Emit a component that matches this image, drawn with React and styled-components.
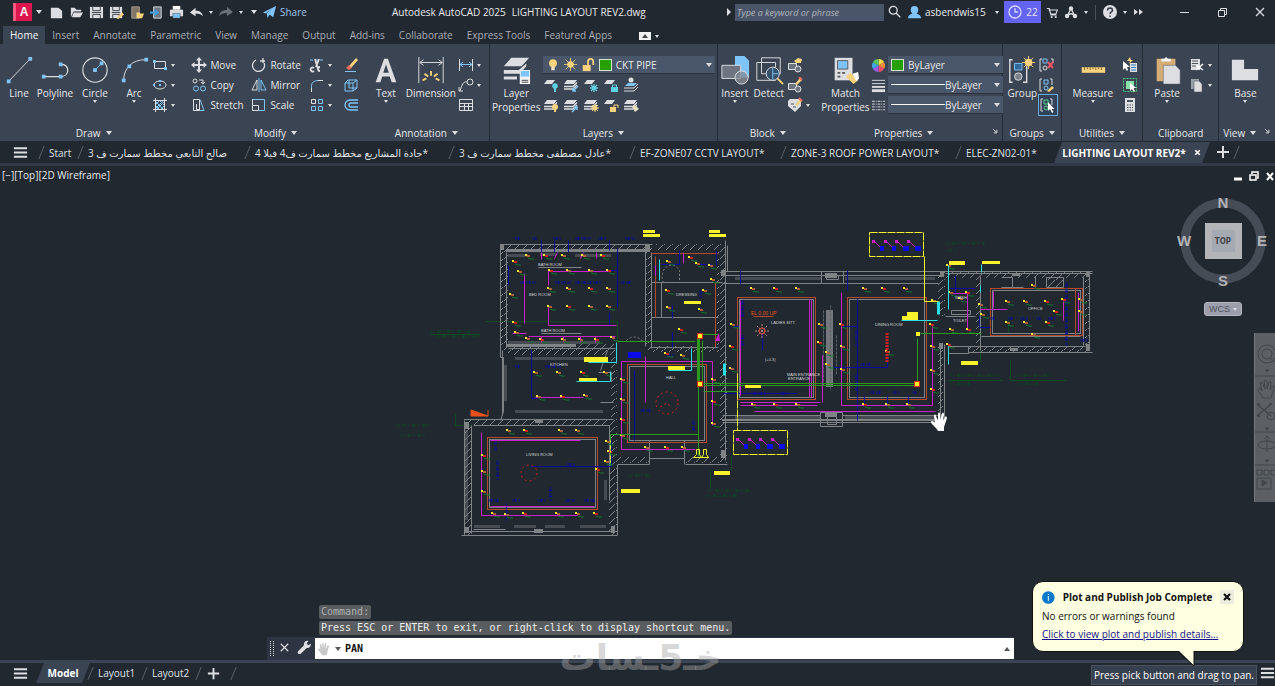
import React, { useState } from 'react';
import styled, { createGlobalStyle } from 'styled-components';

const GlobalStyle = createGlobalStyle`
  * {
    box-sizing: border-box;
  }

  body {
    margin: 0;
    background: #212830;
    color: #e6e8ea;
    font-family: 'Open Sans', 'Noto Sans', 'DejaVu Sans', sans-serif;
    font-size: 10px;
    overflow: hidden;
  }

  button, input, select {
    font: inherit;
    color: inherit;
    background: none;
    border: none;
    padding: 0;
    margin: 0;
  }
`;

const W = '#dcdee1';
const B = '#7fc4f8';
const Y = '#f8d27c';

/* ---------- layout ---------- */

const Page = styled.div`
  position: relative;
  display: flex;
  flex-direction: column;
  min-height: 100vh;
`;

const TitleBar = styled.header`
  display: grid;
  grid-template-columns: 388fr 336fr 551fr;
  align-items: center;
  height: 26px;
  padding-bottom: 2px;
  background: #222830;
`;

const QuickAccess = styled.div`
  display: flex;
  align-items: center;
  padding-left: 13px;
  min-width: 0;
`;

const AppButton = styled.button`
  width: 19px;
  height: 18px;
  background: #dd1650;
  border-left: 3px solid #f4597f;
  color: #fff;
  font-family: 'Liberation Sans', sans-serif;
  font-size: 12px;
  font-weight: bold;
  line-height: 16px;
`;

const IconButton = styled.button`
  display: flex;
  flex: none;
  align-items: center;
  justify-content: center;
  width: ${(props) => props.$w || 20}px;
  height: 20px;
  color: ${(props) => (props.$dim ? '#6b717a' : '#dcdee1')};
`;

const ShareLink = styled.a`
  display: flex;
  align-items: center;
  gap: 3px;
  color: #9fc4e8;
  text-decoration: none;
`;

const WindowTitle = styled.h1`
  display: flex;
  gap: 6px;
  margin: 0;
  padding-left: 4px;
  font-size: 10px;
  font-weight: normal;
  white-space: nowrap;
`;

const TitleTools = styled.div`
  display: flex;
  align-items: center;
  min-width: 0;
`;

const SearchInput = styled.input`
  flex: none;
  width: 149px;
  height: 17px;
  margin-right: 2px;
  padding: 0 2px;
  background: #4a5569;
  font-size: 9px;
  font-style: italic;
  outline: none;

  &::placeholder {
    color: #aeb4bd;
    opacity: 1;
  }
`;

const UserName = styled.span`
  width: 66px;
  padding-left: 1px;
`;

const TrialBadge = styled.button`
  display: flex;
  flex: none;
  align-items: center;
  justify-content: center;
  gap: 3px;
  width: 37px;
  height: 22px;
  margin-right: 2px;
  background: #6463f2;
  color: #e8e8ff;
`;

const Divider = styled.span`
  width: 1px;
  height: 15px;
  margin: 0 4px;
  background: #4a4f58;
`;

const WindowButtons = styled.div`
  display: flex;
  gap: 8px;
  margin-left: auto;
`;

const RibbonTabs = styled.nav`
  display: flex;
  align-items: stretch;
  height: 18px;
  padding-left: 3px;
  background: #222830;
`;

const RibbonTab = styled.button`
  padding: 0 7px;
  background: ${(props) => (props.$active ? '#3b4453' : 'transparent')};
  color: ${(props) => (props.$active ? '#f4f5f6' : '#a9aeb5')};
  white-space: nowrap;
`;

const Ribbon = styled.section`
  display: flex;
  height: 97px;
  background: #3b4453;
`;

const Panel = styled.div`
  display: flex;
  flex: ${(props) => props.$w} 1 0;
  flex-direction: column;
  min-width: 0;
  border-right: 1px solid ${(props) => (props.$edge ? '#262c36' : 'transparent')};
`;

const PanelBody = styled.div`
  display: flex;
  flex: 1;
  align-items: flex-start;
  gap: ${(props) => props.$gap || 0}px;
  padding: 11px 0 0 ${(props) => props.$pad || 2}px;
`;

const PanelTitle = styled.button`
  position: relative;
  display: flex;
  align-items: center;
  justify-content: center;
  gap: 5px;
  height: 17px;
  padding-right: ${(props) => (props.$launcher ? 14 : 0)}px;
  white-space: nowrap;
`;

const Launcher = styled.span`
  position: absolute;
  right: 2px;
  top: 1px;
`;

const Caret = styled.span`
  display: inline-block;
  flex: none;
  width: 0;
  height: 0;
  border: ${(props) => props.$size || 2}px solid transparent;
  border-top: ${(props) => (props.$size || 2) + 1}px solid #dcdee1;
  border-bottom: none;
`;

const LargeButton = styled.button`
  display: flex;
  flex: none;
  flex-direction: column;
  align-items: center;
  width: ${(props) => props.$w}px;
  line-height: 14px;
  white-space: nowrap;

  svg {
    flex: none;
    margin-bottom: 1px;
  }
`;

const SmallGrid = styled.div`
  display: grid;
  grid-template-columns: ${(props) => props.$cols};
  grid-auto-rows: 20px;
`;

const SmallButton = styled.button`
  display: flex;
  align-items: center;
  gap: 3px;
  height: 20px;
  white-space: nowrap;
  outline: ${(props) => (props.$pressed ? '1px solid #6aa9dd' : 'none')};
  background: ${(props) => (props.$pressed ? '#2f4258' : 'transparent')};
`;

const LayerTools = styled.div`
  flex: 1;
`;

const Combo = styled.div`
  display: flex;
  align-items: center;
  gap: 4px;
  height: 18px;
  margin: 1px 2px 1px 0;
  padding: 0 3px;
  background: #4a566a;
  border-bottom: 1px solid #2c333e;
`;

const ComboSelect = styled.select`
  flex: 1;
  min-width: 0;
  appearance: none;
  outline: none;
  text-align: ${(props) => (props.$right ? 'right' : 'left')};
  text-align-last: ${(props) => (props.$right ? 'right' : 'left')};
  padding-right: ${(props) => (props.$right ? 8 : 0)}px;
`;

const ColorSwatch = styled.span`
  width: 13px;
  height: 12px;
  background: #26a000;
  border: 1px solid #d7e4d2;
`;

const LineSample = styled.span`
  width: 54px;
  height: 1px;
  margin-right: -4px;
  background: #f4f5f6;
`;

const PropertyRows = styled.div`
  display: grid;
  flex: 1;
  grid-template-columns: 17px 1fr;
  grid-auto-rows: 20px;
  align-items: center;
`;

const FileTabs = styled.nav`
  display: flex;
  align-items: stretch;
  height: 25px;
  padding: 1px 0 0 0;
  background: #222830;
  border-bottom: 3px solid #323a47;
`;

const MenuButton = styled.button`
  display: flex;
  flex: none;
  align-items: center;
  justify-content: flex-end;
  width: ${(props) => props.$w}px;
  padding-right: ${(props) => props.$w - 28}px;
`;

const FileTab = styled.button`
  position: relative;
  flex: 0 1 ${(props) => props.$w}px;
  padding-left: 8px;
  text-align: left;
  white-space: nowrap;
  color: #dfe1e4;

  svg {
    display: block;
  }

  &::before {
    content: '';
    position: absolute;
    left: 0;
    top: 4px;
    width: 1px;
    height: 13px;
    background: #59616c;
    transform: skewX(-22deg);
  }
`;

const ActiveTab = styled.button`
  display: flex;
  align-items: center;
  justify-content: center;
  gap: 7px;
  width: ${(props) => props.$w}px;
  background: #3b4453;
  color: #fff;
  font-weight: bold;
  white-space: nowrap;
  clip-path: polygon(8px 0, 100% 0, calc(100% - 8px) 100%, 0 100%);
`;

const Viewport = styled.main`
  position: relative;
  flex: 1;
  min-height: 0;
  background: #212830;
`;

const Sheet = styled.svg`
  display: block;
  width: 100%;
  height: auto;
`;

const ViewportLabel = styled.div`
  position: absolute;
  left: 2px;
  top: 2px;
  line-height: 14px;
`;

const ViewportButtons = styled.div`
  position: absolute;
  right: 1px;
  top: 5px;
  display: flex;
  gap: 7px;
`;

const ViewCube = styled.div`
  position: absolute;
  right: 6px;
  top: 26px;
  display: flex;
  flex-direction: column;
  align-items: center;
`;

const WcsButton = styled.button`
  display: flex;
  align-items: center;
  justify-content: space-between;
  width: 38px;
  height: 14px;
  margin-top: 10px;
  padding: 0 4px;
  background: #9c9eab;
  border: 1px solid #b4b6c0;
  border-radius: 3px;
  color: #50535e;
  font-family: 'Liberation Sans', sans-serif;
  font-size: 9px;
`;

const NavBar = styled.div`
  position: absolute;
  right: 0;
  top: 167px;
  width: 21px;
  height: 169px;
  background: #5c6064;
  border-left: 1px solid #74787c;
  overflow: hidden;
`;

const CommandArea = styled.section`
  position: absolute;
  left: 267px;
  right: 261px;
  bottom: 0;
`;

const History = styled.p`
  width: max-content;
  height: 14px;
  margin: 0 0 2px 52px;
  padding: 0 2px;
  background: #5a5d5f;
  border-radius: 2px;
  color: ${(props) => (props.$old ? '#adb0b2' : '#eceded')};
  font-family: 'DejaVu Sans Mono', monospace;
  font-size: 10px;
  line-height: 14px;
`;

const CommandBar = styled.div`
  display: flex;
  align-items: stretch;
  height: 23px;
  background: #2d3442;
  padding-bottom: 1px;
`;

const CommandField = styled.label`
  display: flex;
  flex: 1;
  align-items: center;
  gap: 4px;
  margin-top: 1px;
  padding: 0 4px 0 2px;
  background: #fff;
  color: #111;
`;

const CommandInput = styled.input`
  flex: 1;
  min-width: 0;
  outline: none;
  font-family: 'DejaVu Sans Mono', monospace;
  font-weight: bold;
`;

const Watermark = styled.div`
  position: absolute;
  left: 50%;
  bottom: 4px;
  width: 156px;
  margin-left: -78px;
  color: rgba(168, 168, 168, 0.46);
  font-family: 'DejaVu Sans', sans-serif;
  font-size: 36px;
  font-weight: bold;
  line-height: 48px;
  text-align: center;
  white-space: nowrap;
  pointer-events: none;
`;

const StatusBar = styled.footer`
  display: flex;
  align-items: stretch;
  height: 26px;
  padding-bottom: 3px;
  background: #222830;
  border-top: 3px solid #3b4453;
`;

const StatusTip = styled.span`
  display: flex;
  align-items: center;
  height: 20px;
  margin: 2px 3px 0 auto;
  padding: 0 2px;
  background: #37404e;
  border: 1px solid #4a5261;
  color: #fff;
  white-space: nowrap;
`;

const Balloon = styled.aside`
  position: absolute;
  right: 31px;
  bottom: 34px;
  width: 212px;
  height: 71px;
  padding: 8px 9px;
  background: #ffffe1;
  border: 1px solid #111;
  border-radius: 11px;
  color: #111;
`;

const BalloonHead = styled.div`
  display: flex;
  align-items: center;
  gap: 8px;
  height: 14px;
  font-weight: bold;
  white-space: nowrap;
`;

const BalloonClose = styled.button`
  display: flex;
  align-items: center;
  justify-content: center;
  width: 14px;
  height: 14px;
  margin-left: auto;
  background: #ededdf;
`;

const BalloonText = styled.p`
  margin: 5px 0;
  line-height: 14px;
`;

const BalloonLink = styled.a`
  display: block;
  color: #12128c;
  line-height: 13px;
`;

const BalloonTail = styled.svg`
  position: absolute;
  right: 44px;
  top: 68px;
`;

/* ---------- icons ---------- */

const sheetStack = (
  <>
    <path d="M4 3h10l-3 4H1z" fill={W} />
    <path d="M1 9.500h9l4-4M1 12h9l4-4" stroke={W} strokeWidth="1.300" fill="none" />
  </>
);

const glyphs = {
  newFile: <path d="M2 3h8l4 3v8H2z" fill={W} />,
  open: <path d="M2 13V3h4l2 2h5v2H5zM5 8h10l-3 5H3z" fill={W} />,
  save: (
    <>
      <path d="M1 2h14v12H1z" fill={W} />
      <path d="M4 2v4h8V2M4 14v-4h8v4M3 8h10" stroke="#3a4048" fill="none" />
    </>
  ),
  saveAs: (
    <>
      <path d="M1 2h13v12H1z" fill={W} />
      <path d="M4 2v4h7V2M4 14v-4h7v4M3 8h9" stroke="#3a4048" fill="none" />
      <path d="M8 14l6-6 2 2-6 5z" fill={Y} />
    </>
  ),
  openWeb: (
    <>
      <path d="M3 2h8v12H3z" fill="#7e7568" stroke="#a8a092" />
      <path d="M8 8h3l1 1h4l-2 5H8z" fill={Y} />
    </>
  ),
  saveWeb: (
    <>
      <path d="M5 2h8v12H5z" fill="#6f767f" stroke={W} />
      <path d="M1 7h5V4l5 4-5 4V9H1z" fill="#3f9fe0" />
    </>
  ),
  print: (
    <>
      <path d="M4 1h8v4H4z" fill="#fff" />
      <path d="M1 5h14v7H1z" fill={W} />
      <path d="M4 9h8v5H4z" fill={B} stroke="#3a4048" strokeWidth=".5" />
    </>
  ),
  undo: <path d="M1 8l6-5v3c5 0 7 2 8 6-2-2-4-3-8-3v3z" fill="currentColor" />,
  redo: <path d="M15 8L9 3v3C4 6 2 8 1 12c2-2 4-3 8-3v3z" fill="currentColor" />,
  plane: <path d="M1 8L15 1l-3 12-4-3-2 4-1-5 6-5-7 5z" fill={B} />,
  search: <path d="M6 1.500a4.500 4.500 0 100 9 4.500 4.500 0 000-9zM9.500 9.500L14 14" stroke={W} fill="none" strokeWidth="1.500" />,
  user: <path d="M8 1a4 4 0 014 4c0 2-1 4-2 4 3 1 5 2 5 5H1c0-3 2-4 5-5-1 0-2-2-2-4a4 4 0 014-4z" fill={B} />,
  clock: <path d="M8 2a6 6 0 100 12A6 6 0 008 2zM8 4v4h3" stroke="#d8d8ff" fill="none" strokeWidth="1.300" />,
  cart: (
    <>
      <path d="M1 3h3l2 8h7M4 5h10l-2 5H6z" stroke={W} fill="none" strokeWidth="1.300" />
      <circle cx="7" cy="13.500" r="1.300" fill={W} />
      <circle cx="12" cy="13.500" r="1.300" fill={W} />
    </>
  ),
  network: (
    <>
      <path d="M8 4L4 12M8 4l4 8M4 12q4-4 8 0" stroke={W} fill="none" strokeWidth="1.500" />
      <circle cx="8" cy="4" r="2.500" fill={W} />
      <circle cx="3.500" cy="12.500" r="2.500" fill={W} />
      <circle cx="12.500" cy="12.500" r="2.500" fill={W} />
    </>
  ),
  help: (
    <>
      <circle cx="8" cy="8" r="7" fill={W} />
      <path d="M5.500 6.500C5.500 3 10.500 3 10.500 6.500 10.500 8 8 8 8 10M8 11.500v1.500" stroke="#333a45" fill="none" strokeWidth="1.500" />
    </>
  ),
  more: <path d="M4 5l4 3-4 3zM9 5l4 3-4 3z" fill={W} />,
  minimize: <path d="M4 8.500h9" stroke={W} />,
  restore: <path d="M4.500 6.500h6v6h-6zM6.500 6V4.500h6v6H11" stroke={W} fill="none" />,
  close: <path d="M4 4l8 8M12 4l-8 8" stroke={W} strokeWidth="1.200" />,
  menu: <path d="M1 3.500h14M1 8h14M1 12.500h14" stroke={W} strokeWidth="2" />,
  plus: <path d="M8 2v12M2 8h12" stroke={W} strokeWidth="2" />,
  heavyX: <path d="M4 4l8 8M12 4l-8 8" stroke="currentColor" strokeWidth="3" />,

  rect: <><path d="M2.500 4.500h11v7h-11z" stroke={W} fill="none" /><path d="M1 3h3v3H1zM12 10h3v3h-3z" fill={B} /></>,
  ellipse: <><ellipse cx="8" cy="8" rx="6" ry="4" stroke={W} fill="none" /><path d="M1 7h2v2H1zM7 7h2v2H7zM7 3h2v2H7z" fill={B} /></>,
  hatch: (
    <>
      <path d="M3.500 1v14M12.500 1v14M1 3.500h14M1 12.500h14" stroke={W} fill="none" />
      <path d="M4 7l3-3M4 11l7-7M5 12l7-7M9 12l3-3M4 5l7 7M8 4l4 4M4 9l3 3" stroke={B} />
    </>
  ),
  move: <path d="M8 0l3 3.500H9V7h3.500V5L16 8l-3.500 3V9H9v3.500h2L8 16l-3-3.500h2V9H3.500v2L0 8l3.500-3v2H7V3.500H5z" fill={W} />,
  copy: <><path d="M4 2a2 2 0 100 4 2 2 0 000-4zM8 3h4v4M10 5l2 2 2-2" stroke={W} fill="none" /><path d="M5 9a2.500 2.500 0 100 5 2.500 2.500 0 000-5zM12 9a2.500 2.500 0 100 5 2.500 2.500 0 000-5z" stroke={B} fill="none" /></>,
  stretch: <><path d="M2.500 2.500h6v11h-6zM9 12.500H5.500V7" stroke={W} fill="none" /><path d="M9 2.500l4 11H9" stroke={B} fill="none" /></>,
  rotate: <path d="M5 3a6 6 0 108 3M9 4h5M12 1v5" stroke={W} fill="none" strokeWidth="1.300" />,
  mirror: <><path d="M6 3v10H1z" stroke={W} fill="none" /><path d="M10 3v10h5zM8 1v14" stroke={B} fill="none" /></>,
  scale: <><path d="M1.500 2.500h12v11H8" stroke={B} fill="none" /><path d="M1.500 8.500h6v5h-6zM1.500 2v6" stroke={W} fill="none" /></>,
  trim: <><path d="M1 3h14" stroke={B} strokeDasharray="3 2" /><path d="M6 2l3 10M10 2L7 10M5 11a2 2 0 100 3M11 10a2 2 0 100 4" stroke={W} fill="none" strokeWidth="1.800" /></>,
  fillet: <><path d="M2.500 12V9q0-5.500 7-5.500" stroke={B} fill="none" /><path d="M9 3.500h5M2.500 11v4" stroke={W} /></>,
  array: <><path d="M2.500 2.500h4v4h-4z" stroke={W} fill="none" /><path d="M9.500 2.500h4v4h-4zM2.500 9.500h4v4h-4zM9.500 9.500h4v4h-4z" stroke={B} fill="none" /></>,
  erase: <><path d="M6 9l7-8 2 2-7 8z" fill={Y} /><path d="M3 11l3-3 3 3-3 2z" fill="#f06a5a" /><path d="M2 14.500h11" stroke={B} /></>,
  explode: <path d="M2 6h8v8H2zM5 3h9v8M2 6l3-3M10 6l4-3M10 14l4-3M6 3v8h8" stroke={B} fill="none" />,
  offset: <path d="M15 3H7a5 5 0 000 10h8M15 6H8a2 2 0 000 4h7" stroke={B} fill="none" strokeWidth="1.300" />,
  linear: <><path d="M1.500 2v12M14.500 2v12" stroke={W} /><path d="M2 7.500h12M5 5L2 7.500 5 10M11 5l3 2.500L11 10" stroke={B} fill="none" /></>,
  leader: <><circle cx="12" cy="5" r="3" stroke={W} fill="none" /><path d="M9 5C5 4 4 8 2 14M1 10v4h4" stroke={W} fill="none" /></>,
  table: <path d="M1.500 2.500h13v11h-13zM1.500 6.500h13M1.500 9.500h13M6.500 6v8M10.500 6v8" stroke={W} fill="none" />,

  bulb: <><circle cx="8" cy="6" r="4.500" fill={Y} /><path d="M6 10h4v4H6z" fill="#eee2c4" /></>,
  sun: <><circle cx="8" cy="8" r="4" fill={Y} /><path d="M8 0v16M0 8h16M2 2l12 12M14 2L2 14" stroke={Y} /></>,
  unlock: <><path d="M2 8h9v7H2z" fill={Y} /><path d="M8 8V4a3 3 0 016 0v4" stroke={Y} fill="none" strokeWidth="2" /></>,
  layerOff: <><path d="M4 3h8l-3 4H1z" fill={W} /><circle cx="12" cy="9" r="2.800" fill="#5fd0e0" /><path d="M11 11h2v4h-2z" fill="#5fd0e0" /></>,
  layerIso: <>{sheetStack}<path d="M15 9l-5 5m0-3v3h3" stroke={B} fill="none" strokeWidth="1.500" /></>,
  layerFreeze: <><path d="M4 3h8l-3 4H1z" fill={W} /><path d="M11 7v8M7 11h8M8 8l6 6M14 8l-6 6" stroke="#5fd0e0" strokeWidth="1.300" /></>,
  layerLock: <><path d="M4 3h8l-3 4H1z" fill={W} /><path d="M8 10h7v5H8z" fill="#5fd0e0" /><path d="M9.500 10V8h4v2" stroke="#5fd0e0" fill="none" /></>,
  layerCurrent: <><circle cx="8" cy="3" r="2.500" fill={W} /><path d="M5 6h9l-3 3H2z" fill={B} /><path d="M1 11h10l4-4M1 14h10l4-4" stroke={W} fill="none" /></>,
  layerOn: <>{sheetStack}<circle cx="12" cy="10" r="3" fill={Y} /><path d="M11 12h2v3h-2z" fill={Y} /></>,
  layerUniso: <>{sheetStack}<path d="M9 15l5-5m-3 0h3v3" stroke={B} fill="none" strokeWidth="1.500" /></>,
  layerThaw: <>{sheetStack}<circle cx="12" cy="11" r="2.500" fill={Y} /><path d="M12 7v8M8 11h8M9 8l6 6M15 8l-6 6" stroke={Y} /></>,
  layerUnlock: <><path d="M4 3h8l-3 4H1z" fill={W} /><path d="M7 10h6v5H7z" fill={Y} /><path d="M11 10V8h4v3" stroke={Y} fill="none" /></>,
  layerMatch: <>{sheetStack}<path d="M9 10l3-2 4 4-4 3z" fill="#e7dfc0" /></>,

  blockCreate: <><path d="M1.500 6.500h8v6h-8z" fill="#6b7380" stroke={W} /><circle cx="11" cy="12" r="3" fill="#6b7380" stroke={W} /><path d="M7 4l4-3 4 1-1 4H9z" fill={Y} /></>,
  blockEdit: <><path d="M1.500 6.500h8v6h-8z" fill="#6b7380" stroke={W} /><circle cx="11" cy="12" r="3" fill="#6b7380" stroke={W} /><path d="M8 7l5-6 2 2-5 5z" fill={Y} /><path d="M12 0l3 3" stroke="#f06a5a" strokeWidth="2" /></>,
  attribute: <><path d="M1 4l2-2h11v7l-6 6-7-6z" fill={W} /><path d="M4 7h3M6 10h3" stroke="#555" /><path d="M8 8l5-6 2 2-5 5z" fill={Y} /><path d="M12 1l3 3" stroke="#f06a5a" strokeWidth="2" /></>,
  wheel: (
    <>
      <path d="M8 8V1a7 7 0 016 3.500z" fill="#f6d94b" />
      <path d="M8 8l6-3.500a7 7 0 010 7z" fill="#f28c38" />
      <path d="M8 8l6 3.500A7 7 0 018 15z" fill="#e84c6a" />
      <path d="M8 8v7a7 7 0 01-6-3.500z" fill="#9a5be0" />
      <path d="M8 8l-6 3.500a7 7 0 010-7z" fill="#3fa9e8" />
      <path d="M8 8L2 4.500A7 7 0 018 1z" fill="#5cc45c" />
    </>
  ),
  lineWeight: <><path d="M1 2.500h14M1 6h14" stroke={W} strokeWidth="1" /><path d="M1 9.500h14" stroke={W} strokeWidth="2" /><path d="M1 13.500h14" stroke={W} strokeWidth="3" /></>,
  lineType: <path d="M1 3.500h14M1 6.500h14M1 9.500h14M1 12.500h14" stroke={W} strokeDasharray="3 1 1 1" />,
  ungroup: <><path d="M3 2H1v12h2M12 2h2v4" stroke={W} fill="none" /><path d="M4 2h4v4H4z" stroke={B} fill="none" /><circle cx="6" cy="11" r="2" stroke={W} fill="none" /><path d="M9 5l5 6M14 5l-5 6" stroke="#ee5566" strokeWidth="2" /></>,
  groupEdit: <><path d="M3 2H1v12h2M11 2h2v6" stroke={W} fill="none" /><path d="M5 3h4v4H5z" stroke={B} fill="none" /><circle cx="7" cy="11" r="2" stroke={B} fill="none" /><path d="M8 14l5-5 2 2-5 4z" fill={Y} /></>,
  groupSelect: <><path d="M4 2H2v12h2M11 2h2v6" stroke={W} fill="none" /><path d="M5 3h4v4H5z" stroke="#5fd08a" fill="none" /><circle cx="7" cy="11" r="2" stroke="#5fd08a" fill="none" /><path d="M9 5v9l2-2 2 4 1.500-1-2-3h3z" fill="#fff" /></>,
  quickSelect: <><path d="M8 6h7v9H8z" fill={W} /><path d="M9 8h5M9 10.500h5M9 13h5" stroke="#2a7fc0" /><path d="M1 4v9l2-2 2 3 1-1-1-3h3z" fill="#fff" /><path d="M8 0L5 4h3L7 7l4-4H9z" fill={Y} /></>,
  selectAll: <><path d="M1.500 1.500h13v13h-13z" stroke="#4dc47e" fill="none" strokeDasharray="2 1" /><path d="M4 4h8v8H4z" fill="#8be0a8" /><path d="M8 6v8l2-2 1.500 3 1.500-1-1.500-3h3z" fill="#fff" /></>,
  calc: <><path d="M3 1h10v14H3z" fill={W} /><path d="M5 3h6v2H5z" fill="#4a5260" /><path d="M5 8h6M5 10.500h6M5 13h6" stroke="#4a5260" strokeDasharray="1.500 1" /></>,
  cut: <><path d="M2 2h9v11H2z" fill={W} /><path d="M3 4h6M3 6.500h6M3 9h4" stroke="#555" /><path d="M7 8l7 5M14 7l-7 6" stroke="#fff" strokeWidth="1.500" /></>,
  copyClip: <><path d="M2 2h8v10H2z" fill="#9aa0a8" /><path d="M5 4h5l3 3v8H5z" fill={W} stroke="#555c68" strokeWidth=".6" /></>,
  launcher: <path d="M5 5l5 5M11 6v5H6" stroke={W} fill="none" strokeWidth="1.500" />,
  wrench: <path d="M1 13l7-7c-1-3 2-6 5-5l-2 3 2 2 3-2c0 4-3 6-5 5l-7 7c-2 1-4-1-3-3z" fill={W} />,
  hand: <path d="M6 15C4 12 1 9 1 8s2-1 3 1L3 3c0-1 1.500-1 2 0l1 4V1.500c0-1 1.500-1 1.500 0L8 7l1-5.500c0-1 2-1 1.500.5L10 8l2-4c1-1 2 0 1.500 1L12 11l-1 4z" fill="currentColor" />,

  line: <><path d="M5 28L28 4" stroke={W} /><path d="M3 26h4v4H3zM26 2h4v4h-4z" fill={B} /></>,
  polyline: <><path d="M4 23h18c10 0 10-13 1-13" stroke={W} fill="none" strokeWidth="1.300" /><path d="M2 21h4v4H2zM20 21h4v4h-4zM20 8h4v4h-4z" fill={B} /></>,
  circle: <><circle cx="16" cy="16" r="13" stroke={W} fill="none" strokeWidth="1.200" /><path d="M16 16l7-7" stroke={B} /><path d="M14 14h4v4h-4zM21 7h4v4h-4z" fill={B} /></>,
  arc: <><path d="M5 27C5 14 14 5 28 5" stroke={W} fill="none" /><path d="M3 25h4v4H3zM9 10h4v4H9zM27 3h4v4h-4z" fill={B} /></>,
  text: <path d="M5 29L14 4h4l9 25h-5l-2-6h-8l-2 6zM13 19h6l-3-9z" fill={W} />,
  dimension: <><path d="M3 2v28M29 2v28M4 8h24M8 5L4 8l4 3M24 5l4 3-4 3" stroke={W} fill="none" /><path d="M7 27l4-2M9 20l4 3M16 17v5M23 20l-4 3M25 27l-4-2" stroke={Y} strokeWidth="2" /></>,
  layerProps: <><path d="M11 3h19l-8 9H3zM3 16h16l8-7v3l-7 8H3zM3 23h14v3H3z" fill={W} /><path d="M20 16h11v15H20z" fill="#f1f3f5" /><path d="M21 17h9v6h-9z" fill={B} /><path d="M22 27h7M22 29h7" stroke="#444" /></>,
  insert: <><path d="M16 1h10l5 5v18H16z" fill={B} /><path d="M2 11h20v14H2z" fill="#6f7580" stroke={W} /><circle cx="23" cy="24" r="7" fill="#868c96" fillOpacity=".8" stroke={W} /></>,
  detect: <><path d="M8 3h20v17H8zM3 8h20v19H3z" stroke={W} fill="none" /><circle cx="20" cy="20" r="7" fill="#35506b" stroke={W} /><path d="M20 14v12M20 20h6" stroke={B} /><path d="M25 25l6 6" stroke={Y} strokeWidth="2" /></>,
  match: <><path d="M5 3h19v24H5z" fill={W} /><path d="M8 6h11v9H8z" fill={B} stroke="#555" /><path d="M8 19h3M13 19h3M8 23h3" stroke="#555" strokeWidth="2" /><path d="M17 23l5-4 8 8-5 4z" fill={Y} /><path d="M24 20l6-2 1 7-3 3z" fill="#fff" /></>,
  group: <><path d="M6 5H3v24h3M17 29h4V12" stroke={W} fill="none" strokeWidth="1.500" /><path d="M8 9h8v7H8z" fill="#35689a" stroke={B} /><circle cx="12" cy="23" r="4" fill="#7b828d" stroke={W} /><circle cx="23" cy="8" r="4" fill={Y} /><path d="M23 1v14M16 8h14M18 3l10 10M28 3L18 13" stroke={Y} /></>,
  measure: <><path d="M4 13h25v6H4z" fill={Y} /><path d="M7 13v3M10 13v2M13 13v3M16 13v2M19 13v3M22 13v2M25 13v3" stroke="#7d6630" /></>,
  paste: <><path d="M5 4h20v24H5z" fill="#d6ad76" /><path d="M10 4h3l2-2 2 2h3v3H10z" fill="#f4f4f4" /><path d="M12 11h13l5 5v15H12z" fill={W} stroke="#555c68" strokeWidth=".6" /></>,
  base: <path d="M2 5h13v10h15v12H2z" fill={W} />,
};

const Glyph = ({ name, size = 16 }) => (
  <svg width={size} height={size} viewBox={size >= 26 ? '0 0 32 32' : '0 0 16 16'} aria-hidden="true">
    {glyphs[name]}
  </svg>
);

/* ---------- ribbon pieces ---------- */

const Large = ({ icon, w, label, menu }) => (
  <LargeButton $w={w}>
    <Glyph name={icon} size={30} />
    {label.map((line) => (
      <span key={line}>{line}</span>
    ))}
    {menu && <Caret />}
  </LargeButton>
);

const Small = ({ icon, label, menu, pressed }) => (
  <SmallButton $pressed={pressed} aria-label={label || icon}>
    <Glyph name={icon} />
    {label}
    {menu && <Caret />}
  </SmallButton>
);

const RibbonPanel = ({ w, title, edge, pad, gap, launcher, noMenu, children }) => (
  <Panel $w={w} $edge={edge}>
    <PanelBody $pad={pad} $gap={gap}>{children}</PanelBody>
    <PanelTitle $launcher={launcher}>
      {title}
      {!noMenu && <Caret $size={3} />}
      {launcher && (
        <Launcher>
          <Glyph name="launcher" size={10} />
        </Launcher>
      )}
    </PanelTitle>
  </Panel>
);

const PropertyCombo = ({ label, line }) => (
  <Combo>
    {line ? <LineSample /> : <ColorSwatch />}
    <ComboSelect aria-label={label} $right={line}>
      <option>ByLayer</option>
    </ComboSelect>
    <Caret $size={3} />
  </Combo>
);

/* ---------- drawing ---------- */

const GRAY = '#808386';
const MAG = '#cc1fcc';
const BROWN = '#b5482a';
const BLUE = '#0a0a9c';
const GREEN = '#2b9a18';
const DARK = '#0d4a22';
const YEL = '#f8f32b';

// x, y, width, height
const hatchedWalls = [
  [500, 244, 152, 7], [500, 251, 8, 97], [500, 344, 115, 6], [508, 350, 110, 5],
  [645, 250, 6, 100], [655, 244, 68, 6], [717, 244, 9, 106], [651, 346, 75, 6],
  [720, 352, 7, 110], [617, 457, 32, 6], [685, 457, 42, 6], [611, 350, 6, 70],
  [464, 419, 153, 6], [464, 425, 8, 110], [609, 425, 8, 110],
  [938, 272, 7, 44], [938, 344, 7, 77], [975, 275, 5, 72], [945, 272, 145, 6],
  [1085, 276, 5, 75], [968, 346, 122, 6], [1046, 278, 17, 9],
];

const solidWalls = [
  [506, 249, 142, 3], [506, 344, 70, 3], [500, 244, 4, 6], [645, 244, 5, 8],
  [722, 419, 222, 2], [825, 413, 12, 4], [825, 273, 12, 5], [940, 272, 4, 5],
  [1086, 272, 4, 5], [1086, 344, 4, 7], [939, 343, 4, 6], [464, 422, 5, 7],
  [464, 527, 5, 6], [611, 526, 4, 7], [534, 529, 9, 4], [721, 270, 5, 6],
  [721, 450, 5, 8], [535, 420, 8, 3], [1012, 274, 8, 2], [1010, 348, 8, 3],
];

const grayLines = [
  'M500 244H652M500 244V357H503V411L500 420M506 252V344M645 250V346M651 252V348M651 282H722M651 317H718M661 282V317',
  'M727 245V271M725 240V460M617 464H649V440M649 449H684V458H649M685 464H727M684 440V464M617 464V535M461 535H617M464 419H613',
  'M464 420V535M471 425V533M609 425V500M465 531H616M473 529H505M502 350V415M508 348H615M651 347H718M473 425H609',
  'M722 271H1092M722 275H944M722 283H821M843 283H938M722 422H944M722 415H820M842 415H944',
  'M821 271H843V283H821ZM826 275H838V279H826ZM820 412H842V426H820ZM827 415H836V424H827Z',
  'M945 273H1092M1089 271V350M1083 277V345M968 352H1092M968 346H1085M944 344V421M940 344V421M945 316H975M951 310H970V314H951Z',
  'M1001 277H1012V287H1001M1012 287H1023M980 276V350M981 336H1080M948 346H968V353H948ZM1035 276V287M1046 277H1063V287H1046Z',
  'M600 370L607 350M598 372H611V380M600 402H613',
];

const dottedLines = [
  'M508 255H528M540 254H555M575 255H610M515 358H605M515 411H602M735 278H820M845 278H935M735 417H820M845 417H935',
  'M474 526H500M514 526H535M545 526H565M580 526H605M466 430V520M508 342H600M505 365V400M605 480V500',
];

const innerRooms = [
  [627, 364, 79, 78], [487, 437, 110, 72], [737, 297, 78, 102], [847, 297, 79, 102], [990, 288, 92, 47],
];

const magentaLines = [
  'M524 273V323M548 271H608M548 271V285M548 307V325H616M512 333H526M528 336H615M541 336V342M563 336V341M580 336V341M595 336V342',
  'M541 252V259M554 258L557 252M580 258L583 252M596 258V252M535 397H583M645 356V402',
  'M712 425V361H621V449H695M481 432V515H577M490 440H580M490 506H594M740 300V395M809 299V397M811 299V397',
  'M740 402H820M740 405H817M822 355V402M841 292V405H932V325M754 411H935M950 293H967V330M980 309H1007M993 291V307M1063 301V320M1078 292V331M655 265V275M683 253V263',
];

const blueLines = [
  'M541 240V252M554 240V252M568 240V252M609 240V250M617 248V307M609 270H617M609 312V325M531 350V398H537M508 265V285',
  'M530 466H611V440M506 503V520M733 326H738M762 333V350M723 393H797M740 270V284M857 298V420M847 270V290M833 367H887V357M841 326H857',
  'M864 395V405M887 395V405M908 395V405M661 264H680M697 264H712M679 250V264M716 250V265M672 305V318M672 332V347M722 393H733M955 275V295M950 288H975M979 316V327H990M634 370V440',
];

const blueTicks = [
  'M515 238H520M532 238H538M553 238H560M575 238H590M598 238H606M625 238H634',
  'M520 282H535M555 282H570M575 282H600M620 282H630M515 366H520M545 366H560M640 410H650M693 420V432M495 440V452M497 460V480M550 487V500',
  'M488 500H500M512 500H520M538 500H546M565 500H574M584 500H594M567 464H575M752 393H765M780 393H788M742 300V316M742 335V345',
  'M870 392H880M892 392H900M912 392H918M856 330V345M856 375V390M990 318H996M1008 318H1014M1020 318H1028M1036 318H1040M1048 318H1056M1066 282V345M860 364H872M1080 340H1088M666 355H673M700 290V298',
];

const fixtures = [
  [550, 271], [568, 271], [590, 271], [608, 271], [549, 289], [568, 289], [590, 289], [608, 289],
  [549, 307], [568, 307], [590, 307], [608, 307], [514, 262], [519, 272], [511, 295], [514, 323], [516, 333],
  [527, 339], [541, 340], [563, 340], [580, 340], [596, 340], [612, 338], [527, 256], [545, 256], [563, 256], [583, 256], [602, 256],
  [535, 373], [558, 373], [582, 373], [605, 373], [538, 397], [562, 397], [585, 396], [668, 262], [690, 258], [697, 264], [710, 266],
  [667, 291], [704, 291], [668, 308], [680, 330], [700, 310], [712, 280], [666, 354], [682, 356],
  [508, 431], [525, 431], [560, 431], [577, 431], [483, 456], [483, 472], [483, 492], [597, 470], [493, 514], [506, 515], [524, 514],
  [557, 514], [577, 514], [595, 514], [607, 442], [606, 462], [609, 452], [622, 380], [622, 400], [622, 420], [622, 436], [713, 380],
  [713, 402], [713, 424], [646, 448], [666, 448], [683, 448], [752, 289], [775, 289], [797, 289], [864, 289], [883, 289], [905, 289],
  [732, 325], [731, 347], [731, 369], [753, 405], [775, 405], [797, 405], [820, 325], [819, 343], [827, 353], [827, 365], [841, 325],
  [842, 347], [842, 370], [864, 405], [887, 405], [908, 405], [931, 325], [932, 347], [932, 371], [932, 390], [887, 352],
  [950, 293], [967, 293], [960, 299], [951, 330], [968, 330], [980, 305], [982, 315], [948, 345], [1007, 302], [1025, 302], [1046, 302],
  [1007, 323], [1025, 323], [1047, 323], [1033, 335], [1033, 286], [1063, 300], [1080, 300], [1080, 312], [1055, 312], [948, 266], [933, 301],
];

const labels = [
  [643, 230, 12, 3], [643, 234, 17, 3], [709, 230, 11, 3], [709, 234, 17, 3], [684, 301, 17, 3], [584, 357, 24, 5],
  [579, 378, 18, 3], [668, 366, 17, 4], [621, 489, 19, 4], [714, 471, 16, 4], [745, 385, 16, 3], [902, 316, 16, 4],
  [907, 312, 11, 5], [949, 261, 16, 4], [982, 261, 18, 3], [961, 361, 17, 4],
];

const darkNotes = [
  'M395 425H430M400 435H425M430 331H470M435 336H480M945 243H985M947 250H955M950 375H998M950 383H970M1016 375H1050M1018 383H1038M708 490H750M706 495H738M628 475H650',
];

const roomNames = [
  [529, 296, 'BED ROOM'], [538, 266, 'BATH ROOM'], [541, 332, 'BATH ROOM'], [550, 366, 'KITCHEN'], [676, 296, 'DRESSING'],
  [526, 456, 'LIVING ROOM'], [771, 324, 'LADIES SITT'], [787, 376, 'MAIN ENTRANCE'], [788, 380, 'ENTRANCE'],
  [875, 326, 'DINING ROOM'], [1028, 310, 'OFFICE'], [953, 322, 'TOILET'], [955, 299, 'WASH'], [666, 379, 'HALL'], [765, 361, '(+0.3)'],
];

const Box = ({ box: [x, y, w, h], fill }) => <rect x={x} y={y} width={w} height={h} fill={fill} />;

const LegendBox = ({ x, y }) => (
  <g>
    <rect x={x + 0.5} y={y + 0.5} width="54" height="24" fill="none" stroke={YEL} strokeDasharray="8 1" />
    {[4, 16, 27, 39].map((dx) => (
      <g key={dx}>
        <path d={`M${x + dx} ${y + 8}l7 7`} stroke={MAG} />
        <rect x={x + dx - 1} y={y + 8} width="3" height="3" fill={MAG} />
        <rect x={x + dx + 7} y={y + 14} width={dx % 2 ? 6 : 4} height="5" fill="#0b0bea" />
      </g>
    ))}
  </g>
);

const Node = ({ x, y }) => (
  <g>
    <rect x={x - 3} y={y - 3} width="6" height="6" fill="#e02a18" />
    <rect x={x - 2} y={y - 2} width="4" height="4" fill={YEL} />
  </g>
);

// strokes sit on pixel centres, fills on pixel edges
const HALF = 'translate(.5 .5)';

const FloorPlan = () => (
  <Sheet viewBox="0 166 1275 494" role="img" aria-label="Lighting layout floor plan">
    <defs>
      <pattern id="hatch" width="8" height="7" patternUnits="userSpaceOnUse">
        <path d="M0 7L7 0" stroke={GRAY} fill="none" />
      </pattern>
    </defs>
    <g fill="none" stroke={DARK} transform={HALF}>
      {darkNotes.map((d) => <path key={d} d={d} strokeWidth="3" strokeDasharray="1 2 1 3 2 1" strokeOpacity=".7" />)}
      <path d="M485 321H617V341M430 334H480M455 414V425H471M948 380H1002M1010 360V380H1066M731 455V470M980 300V362M1008 320V333M710 470V488" />
    </g>
    {hatchedWalls.map((box) => <Box key={box.join()} box={box} fill="url(#hatch)" />)}
    {solidWalls.map((box) => <Box key={box.join()} box={box} fill={GRAY} />)}
    <rect x="826" y="310" width="7" height="77" fill="#74787c" />
    <g fill="none" stroke={GRAY} transform={HALF}>
      <path d="M830 305V390M836 335V375M823 310V385" stroke="#5c6166" strokeDasharray="3 1" />
      {grayLines.map((d) => <path key={d} d={d} />)}
      {dottedLines.map((d) => <path key={d} d={d} strokeDasharray="1 1" strokeWidth="3" strokeOpacity=".8" />)}
      <path d="M538 267H581M541 333H581" />
      <path d="M626 340a10 9 0 0117 2M663 282a9 11 0 0116-12v12" strokeDasharray="2 2" />
    </g>
    <g transform={HALF} fill="none">
      {innerRooms.map(([x, y, w, h]) => (
        <g key={`${x}-${y}`}>
          <rect x={x} y={y} width={w} height={h} stroke={BROWN} />
          <rect x={x + 2} y={y + 2} width={w - 4} height={h - 4} stroke={GRAY} />
        </g>
      ))}
      <path d="M651 253H718M655 256V317M715 282V346M1075 288V335M753 316H773" stroke={BROWN} />
      <g stroke={BLUE}>
        {blueLines.map((d) => <path key={d} d={d} />)}
        {blueTicks.map((d) => <path key={d} d={d} strokeWidth="3" strokeDasharray="1 1 2 2" strokeOpacity=".8" />)}
      </g>
      <g stroke={MAG}>
        {magentaLines.map((d) => <path key={d} d={d} />)}
      </g>
    </g>
    <rect x="628" y="352" width="13" height="6" fill="#0b0bea" />
    {fixtures.map(([x, y], i) => (
      <g key={`${x}-${y}`}>
        <rect x={x - 2} y={y - 2} width="2" height="2" fill={YEL} />
        <rect x={x} y={y - 1} width="3" height="2" fill={i % 3 ? '#a85f38' : '#d02020'} />
        <path d={`M${x + 1} ${y + 2}l3 1h3`} stroke="#12772f" fill="none" />
      </g>
    ))}
    <g transform={HALF} fill="none">
      <g stroke={GREEN}>
        <path d="M698 334V384" strokeWidth="3" />
        <path d="M698 384V456M702 340V384M617 341H695M610 465V434H698M703 383H915M703 385H915M703 391H737M917 338V383M920 333H981M700 334H718" />
      </g>
      <path d="M588 362H616V342M576 381H610V371M668 370H691V348M901 320H937M948 265V309M981 264V272M980 285V292M948 346V364M659 259V280" stroke="#2bdfe6" />
      <path d="M724 363V375M938 301V314" stroke="#2bdfe6" strokeWidth="3" />
      <path d="M693 457l3-3v-5h3v5l2 3zM701 457l2-3v-5h3v5l2 3zM924 256V301H938" stroke={YEL} />
      <path d="M737 373V430" stroke={YEL} strokeDasharray="8 1" />
      <path d="M610 440V464" stroke={YEL} strokeDasharray="2 3 4 1" />
    </g>
    <path d="M715 341l4-8 1 8z" fill={MAG} />
    {labels.map((box) => <Box key={box.join()} box={box} fill={YEL} />)}
    <LegendBox x={869} y={232} />
    <LegendBox x={733} y={430} />
    <Node x={700} y={336} />
    <Node x={700} y={384} />
    <Node x={917} y={384} />
    <rect x="916" y="332" width="4" height="4" fill={YEL} />
    <path d="M471 410l17 6h-17zM488 410v6" fill="#e8501c" stroke="#e8501c" />
    <g fill="none" stroke="#d21f1f" strokeDasharray="2 3">
      <circle cx="667" cy="403" r="11" />
      <path d="M660 407l7-4 5 5" />
      <circle cx="529" cy="473" r="8" />
      <path d="M887 333V363" strokeWidth="3" strokeDasharray="2 1" />
    </g>
    <g stroke="#b9857e">
      <path d="M762 324V338M755 331H769M757 326L767 336M767 326L757 336" strokeDasharray="2 1" />
      <circle cx="762" cy="331" r="3" fill="none" stroke="#d23a30" />
    </g>
    <g fill="#d5d7d9" fontFamily="'Liberation Sans', sans-serif" fontSize="4">
      {roomNames.map(([x, y, name]) => <text key={`${x}-${y}`} x={x} y={y}>{name}</text>)}
      <text x="751" y="315" fill="#e8501c" fontSize="5">EL 0.00 UP</text>
    </g>
    <path d="M938 431C936 427 931 424 931 422s3-1 4 1L934 416c0-2 2-2 2 0l2 5V414c0-2 2-2 2 0v6l2-6c0-2 2-1 2 0l-1 7 2-4c1-1 2 0 2 1l-3 9v4z" fill="#fff" />
  </Sheet>
);

const Compass = () => (
  <svg width="92" height="100" viewBox="1176 192 92 100">
    <circle cx="1222" cy="241" r="38" fill="none" stroke="#454c56" strokeWidth="9" />
    <rect x="1204" y="223" width="37" height="36" fill="#b2b4b7" />
    <rect x="1211" y="230" width="23" height="22" fill="#a5a9b2" />
    <g fontFamily="'Liberation Sans', sans-serif" fontWeight="bold" textAnchor="middle" fill="#b0b2b5" fontSize="15">
      <text x="1222" y="208">N</text>
      <text x="1222" y="286">S</text>
      <text x="1183" y="246">W</text>
      <text x="1261" y="246">E</text>
      <text x="1222" y="244" fontFamily="'DejaVu Sans Condensed', 'DejaVu Sans', sans-serif" fontSize="8" fill="#43474f">TOP</text>
    </g>
  </svg>
);

const NavIcons = () => (
  <svg width="21" height="169" viewBox="0 0 21 169" fill="none" stroke="#41464b">
    <circle cx="12" cy="21" r="9" />
    <circle cx="12" cy="21" r="5" />
    <path d="M15 25l6 5M0 43h21" />
    <path d="M8 65c-2-4-6-7-5-9s4 1 4 2L5 50c1-1 2-1 3 1l2 5-1-8c1-2 2-1 3 1v7l2-7c1-1 2 0 2 1l-1 7 3-4c1 0 2 1 1 2l-3 10z" />
    <path d="M2 71l14 12M2 83l14-12M2 71h3M2 83h3M14 71h3" strokeWidth="1.500" />
    <circle cx="16" cy="83" r="4" />
    <path d="M0 99h21M12 103v16M9 106l3-3 3 3M0 132h21" />
    <ellipse cx="12" cy="112" rx="9" ry="4" />
    <path d="M2 137h5v5H2zM9 137h5v5H9zM16 137h5v5h-5zM2 145h14v11H2z" />
    <path d="M7 147l5 3-5 3zM10 37h4l-2 2zM10 95h4l-2 2zM10 127h4l-2 2z" fill="#41464b" />
  </svg>
);

/* ---------- data ---------- */

const ribbonTabs = ['Home', 'Insert', 'Annotate', 'Parametric', 'View', 'Manage', 'Output', 'Add-ins', 'Collaborate', 'Express Tools', 'Featured Apps'];

const fileTabs = [
  { name: 'Start', w: 39 },
  { name: 'صالح التابعي مخطط سمارت ف 3', w: 167 },
  { name: 'جادة المشاريع  مخطط سمارت ف4 فيلا 4*', w: 204 },
  { name: 'عادل مصطفى  مخطط سمارت ف 3*', w: 181 },
  { name: 'EF-ZONE07 CCTV LAYOUT*', w: 151 },
  { name: 'ZONE-3 ROOF  POWER LAYOUT*', w: 175 },
  { name: 'ELEC-ZN02-01*', w: 96 },
];

const layerIcons = [
  'layerOff', 'layerIso', 'layerFreeze', 'layerLock', 'layerCurrent',
  'layerOn', 'layerUniso', 'layerThaw', 'layerUnlock', 'layerMatch',
];

const App = () => {
  const [activeTab, setActiveTab] = useState('Home');
  const [command, setCommand] = useState('PAN');
  const [showBalloon, setShowBalloon] = useState(true);

  return (
    <Page>
      <GlobalStyle />
      <TitleBar>
        <QuickAccess>
          <AppButton>A</AppButton>
          <IconButton $w={14} aria-label="Application menu"><Caret $size={3} /></IconButton>
          {['newFile', 'open', 'save', 'saveAs', 'openWeb', 'saveWeb', 'print', 'undo'].map((name) => (
            <IconButton key={name} aria-label={name}><Glyph name={name} size={15} /></IconButton>
          ))}
          <IconButton $w={10} aria-label="Undo history"><Caret /></IconButton>
          <IconButton $dim aria-label="redo"><Glyph name="redo" /></IconButton>
          <IconButton $w={10} aria-label="Redo history"><Caret /></IconButton>
          <IconButton $w={16} aria-label="Customize"><Caret $size={3} /></IconButton>
          <ShareLink href="#share"><Glyph name="plane" size={15} />Share</ShareLink>
        </QuickAccess>
        <WindowTitle>
          <span>Autodesk AutoCAD 2025</span>
          <span>LIGHTING LAYOUT REV2.dwg</span>
        </WindowTitle>
        <TitleTools>
          <svg width="11" height="8" viewBox="0 0 11 8"><path d="M3 0l4 4-4 4z" fill={W} /></svg>
          <SearchInput aria-label="Search" placeholder="Type a keyword or phrase" />
          <IconButton $w={18} aria-label="search"><Glyph name="search" size={14} /></IconButton>
          <IconButton aria-label="user"><Glyph name="user" size={15} /></IconButton>
          <UserName>asbendwis15</UserName>
          <IconButton $w={14} aria-label="Account"><Caret /></IconButton>
          <TrialBadge><Glyph name="clock" />22</TrialBadge>
          <IconButton $w={18} aria-label="cart"><Glyph name="cart" size={13} /></IconButton>
          <IconButton aria-label="network"><Glyph name="network" size={14} /></IconButton>
          <IconButton $w={10} aria-label="Network menu"><Caret /></IconButton>
          <Divider />
          <IconButton aria-label="help"><Glyph name="help" /></IconButton>
          <IconButton $w={10} aria-label="Help menu"><Caret /></IconButton>
          <IconButton $w={16} aria-label="more"><Glyph name="more" /></IconButton>
          <WindowButtons>
            {['minimize', 'restore', 'close'].map((name) => (
              <IconButton key={name} $w={30} aria-label={name}><Glyph name={name} /></IconButton>
            ))}
          </WindowButtons>
        </TitleTools>
      </TitleBar>

      <RibbonTabs>
        {ribbonTabs.map((tab) => (
          <RibbonTab key={tab} $active={tab === activeTab} onClick={() => setActiveTab(tab)}>
            {tab}
          </RibbonTab>
        ))}
        <IconButton $w={60} aria-label="Minimize ribbon">
          <svg width="20" height="8" viewBox="0 0 20 8">
            <path d="M0 0h12v8H0z" fill="#f0f1f2" />
            <path d="M3 6l3-4 3 4z" fill="#444" />
            <path d="M16 3h4l-2 3z" fill={W} />
          </svg>
        </IconButton>
      </RibbonTabs>

      <Ribbon>
        <RibbonPanel w={189} title="Draw">
          <Large icon="line" w={34} label={['Line']} />
          <Large icon="polyline" w={38} label={['Polyline']} />
          <Large icon="circle" w={42} label={['Circle']} menu />
          <Large icon="arc" w={36} label={['Arc']} menu />
          <SmallGrid $cols="30px">
            <Small icon="rect" menu />
            <Small icon="ellipse" menu />
            <Small icon="hatch" menu />
          </SmallGrid>
        </RibbonPanel>
        <RibbonPanel w={176} title="Modify" pad={3}>
          <SmallGrid $cols="60px 58px 34px 16px">
            <Small icon="move" label="Move" />
            <Small icon="rotate" label="Rotate" />
            <Small icon="trim" menu />
            <Small icon="erase" />
            <Small icon="copy" label="Copy" />
            <Small icon="mirror" label="Mirror" />
            <Small icon="fillet" menu />
            <Small icon="explode" />
            <Small icon="stretch" label="Stretch" />
            <Small icon="scale" label="Scale" />
            <Small icon="array" menu />
            <Small icon="offset" />
          </SmallGrid>
        </RibbonPanel>
        <RibbonPanel w={126} title="Annotation" edge pad={4}>
          <Large icon="text" w={36} label={['Text']} menu />
          <Large icon="dimension" w={54} label={['Dimension']} />
          <SmallGrid $cols="30px">
            <Small icon="linear" menu />
            <Small icon="leader" menu />
            <Small icon="table" />
          </SmallGrid>
        </RibbonPanel>
        <RibbonPanel w={229} title="Layers" edge gap={2}>
          <Large icon="layerProps" w={49} label={['Layer', 'Properties']} />
          <LayerTools>
            <Combo>
              <Glyph name="bulb" size={14} />
              <Glyph name="sun" size={13} />
              <Glyph name="unlock" size={14} />
              <ColorSwatch />
              <ComboSelect aria-label="Layer">
                <option>CKT PIPE</option>
              </ComboSelect>
              <Caret $size={3} />
            </Combo>
            <SmallGrid $cols="repeat(5, 20px)">
              {layerIcons.map((name) => <Small key={name} icon={name} />)}
            </SmallGrid>
          </LayerTools>
        </RibbonPanel>
        <RibbonPanel w={101} title="Block" pad={1}>
          <Large icon="insert" w={32} label={['Insert']} menu />
          <Large icon="detect" w={36} label={['Detect']} />
          <SmallGrid $cols="30px">
            <Small icon="blockCreate" />
            <Small icon="blockEdit" />
            <Small icon="attribute" menu />
          </SmallGrid>
        </RibbonPanel>
        <RibbonPanel w={185} title="Properties" edge launcher pad={1}>
          <Large icon="match" w={51} label={['Match', 'Properties']} />
          <PropertyRows>
            <Glyph name="wheel" size={15} />
            <PropertyCombo label="Object color" />
            <Glyph name="lineWeight" size={15} />
            <PropertyCombo label="Lineweight" line />
            <Glyph name="lineType" size={15} />
            <PropertyCombo label="Linetype" line />
          </PropertyRows>
        </RibbonPanel>
        <RibbonPanel w={58} title="Groups" edge>
          <Large icon="group" w={34} label={['Group']} />
          <SmallGrid $cols="18px">
            <Small icon="ungroup" />
            <Small icon="groupEdit" />
            <Small icon="groupSelect" pressed />
          </SmallGrid>
        </RibbonPanel>
        <RibbonPanel w={81} title="Utilities" edge>
          <Large icon="measure" w={58} label={['Measure']} menu />
          <SmallGrid $cols="20px">
            <Small icon="quickSelect" />
            <Small icon="selectAll" />
            <Small icon="calc" />
          </SmallGrid>
        </RibbonPanel>
        <RibbonPanel w={76} title="Clipboard" edge noMenu>
          <Large icon="paste" w={44} label={['Paste']} menu />
          <SmallGrid $cols="26px">
            <Small icon="cut" menu />
            <Small icon="copyClip" menu />
          </SmallGrid>
        </RibbonPanel>
        <RibbonPanel w={55} title="View" launcher>
          <Large icon="base" w={48} label={['Base']} menu />
        </RibbonPanel>
      </Ribbon>

      <FileTabs>
        <MenuButton $w={41} aria-label="File tab menu"><Glyph name="menu" size={15} /></MenuButton>
        {fileTabs.map((tab) => (
          <FileTab key={tab.name} $w={tab.w}>{tab.name}</FileTab>
        ))}
        <ActiveTab $w={156}>
          LIGHTING LAYOUT REV2*
          <Glyph name="heavyX" size={9} />
        </ActiveTab>
        <IconButton $w={26} aria-label="New drawing"><Glyph name="plus" /></IconButton>
        <FileTab $w={20} aria-label="More tabs" />
      </FileTabs>

      <Viewport>
        <FloorPlan />
        <ViewportLabel>[−][Top][2D Wireframe]</ViewportLabel>
        <ViewportButtons>
          <svg width="9" height="11" viewBox="0 0 9 11"><path d="M1 8h8" stroke="#fff" strokeWidth="3" /></svg>
          <svg width="10" height="11" viewBox="0 0 10 11"><path d="M1 4h6v5H1zM3 3V1h6v6H8" stroke="#fff" strokeWidth="1.500" fill="none" /></svg>
          <svg width="8" height="11" viewBox="0 0 8 11"><path d="M1 2l6 7M7 2L1 9" stroke="#fff" strokeWidth="2" /></svg>
        </ViewportButtons>
        <ViewCube>
          <Compass />
          <WcsButton>WCS<Caret /></WcsButton>
        </ViewCube>
        <NavBar><NavIcons /></NavBar>
        <CommandArea>
          <History $old>Command:</History>
          <History>Press ESC or ENTER to exit, or right-click to display shortcut menu.</History>
          <CommandBar>
            <svg width="8" height="22" viewBox="0 0 8 22">
              <path d="M3.500 4v15M6.500 4v15" stroke={W} strokeDasharray="1 1" />
            </svg>
            <IconButton $w={18} aria-label="Close command line"><Glyph name="close" size={15} /></IconButton>
            <IconButton $w={22} aria-label="Customize command line"><Glyph name="wrench" size={14} /></IconButton>
            <CommandField>
              <svg width="14" height="14" viewBox="0 0 16 16" color="#c9c9c9">{glyphs.hand}</svg>
              <svg width="6" height="4" viewBox="0 0 6 4"><path d="M0 0h6L3 4z" fill="#555" /></svg>
              <CommandInput aria-label="Command" value={command} onChange={(e) => setCommand(e.target.value)} />
              <svg width="6" height="4" viewBox="0 0 6 4"><path d="M0 4h6L3 0z" fill="#555" /></svg>
            </CommandField>
          </CommandBar>
        </CommandArea>
      </Viewport>

      <StatusBar>
        <MenuButton $w={36} aria-label="Layout menu"><Glyph name="menu" size={15} /></MenuButton>
        <ActiveTab $w={54}>Model</ActiveTab>
        <FileTab $w={54}>Layout1</FileTab>
        <FileTab $w={54}>Layout2</FileTab>
        <FileTab $w={35} aria-label="New layout"><Glyph name="plus" size={15} /></FileTab>
        <FileTab $w={20} aria-label="More layouts" />
        <StatusTip>Press pick button and drag to pan.</StatusTip>
        <IconButton $w={15} aria-label="Customization"><Glyph name="menu" /></IconButton>
      </StatusBar>

      <Watermark>خـ5ـسات</Watermark>

      {showBalloon && (
        <Balloon>
          <BalloonHead>
            <svg width="13" height="13" viewBox="0 0 13 13">
              <circle cx="6.500" cy="6.500" r="6.500" fill="#0a78cc" />
              <path d="M6.500 3v1M6.500 5v5" stroke="#fff" />
            </svg>
            Plot and Publish Job Complete
            <BalloonClose aria-label="Dismiss" onClick={() => setShowBalloon(false)}>
              <Glyph name="heavyX" size={12} />
            </BalloonClose>
          </BalloonHead>
          <BalloonText>No errors or warnings found</BalloonText>
          <BalloonLink href="#details">Click to view plot and publish details...</BalloonLink>
          <BalloonTail width="22" height="17" viewBox="0 0 22 17">
            <path d="M1 0L17 16V0z" fill="#ffffe1" />
            <path d="M1 1l16 15V1" fill="none" stroke="#111" />
          </BalloonTail>
        </Balloon>
      )}
    </Page>
  );
};

export default App;
